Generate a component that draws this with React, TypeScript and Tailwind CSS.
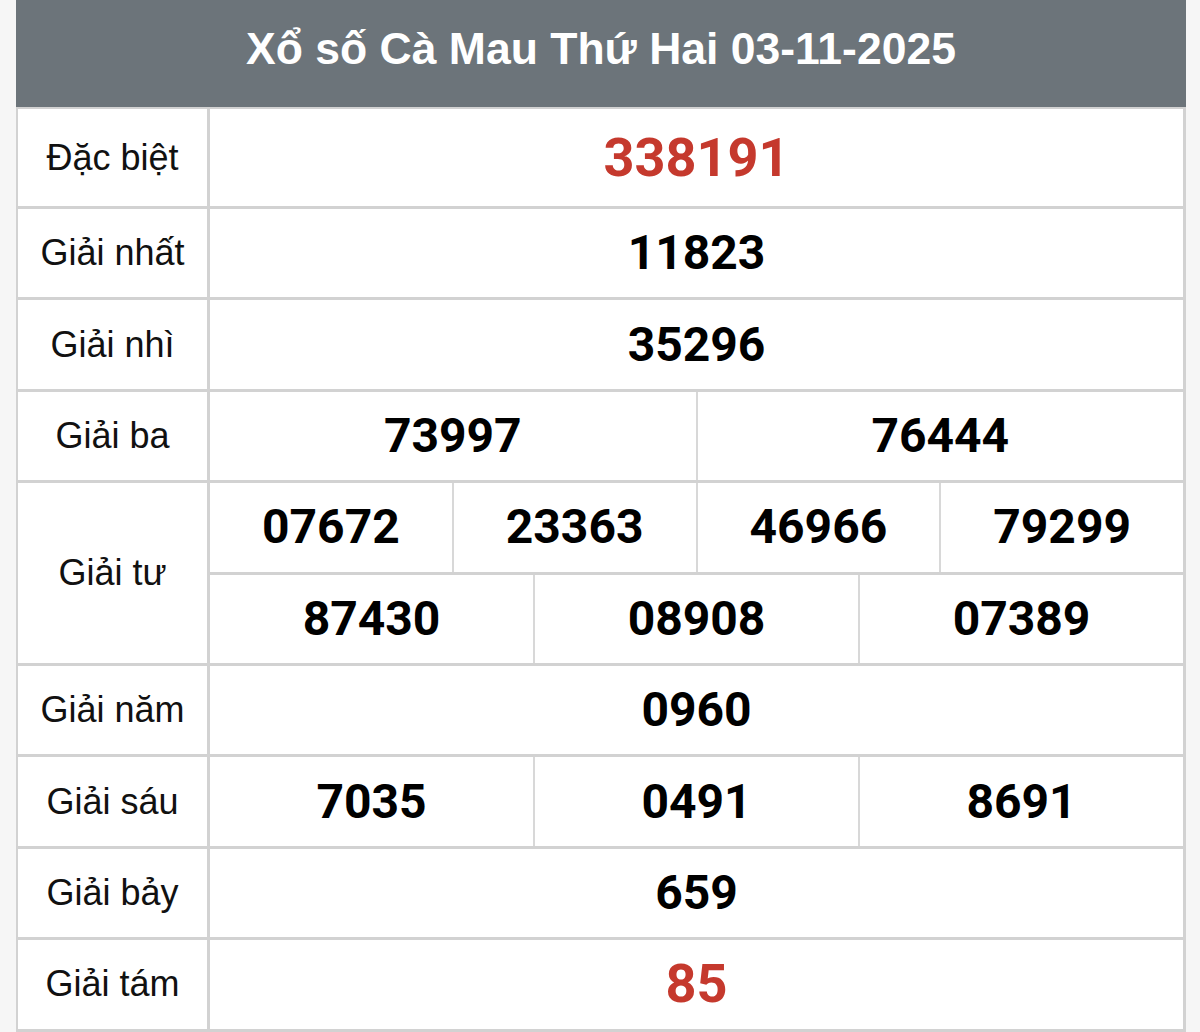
import React from "react";

type Row = {
  label: string;
  lines: string[][];
  red?: boolean;
  big?: boolean;
};

const rows: Row[] = [
  { label: "Đặc biệt", lines: [["338191"]], red: true, big: true },
  { label: "Giải nhất", lines: [["11823"]] },
  { label: "Giải nhì", lines: [["35296"]] },
  { label: "Giải ba", lines: [["73997", "76444"]] },
  { label: "Giải tư", lines: [["07672", "23363", "46966", "79299"], ["87430", "08908", "07389"]] },
  { label: "Giải năm", lines: [["0960"]] },
  { label: "Giải sáu", lines: [["7035", "0491", "8691"]] },
  { label: "Giải bảy", lines: [["659"]] },
  { label: "Giải tám", lines: [["85"]], red: true, big: true },
];

const numFont = { fontFamily: "Roboto, 'Liberation Sans', Arial, sans-serif" };

const PrizeRow = ({ row, first }: { row: Row; first: boolean }) => {
  return (
    <div className={`flex border-b-[3px] border-[#d2d2d2] ${first ? "h-[100px]" : ""}`}>
      <div className="w-[192px] shrink-0 flex items-center justify-center border-r-[3px] border-[#d2d2d2] text-[36px] text-[#111]">
        {row.label}
      </div>
      <div className="flex-1 flex flex-col">
        {row.lines.map((line, i) => (
          <div
            key={i}
            className={`flex shrink-0 ${first ? "flex-1" : "h-[88.4px]"} ${
              i < row.lines.length - 1 ? "border-b-[3px] border-[#d2d2d2] h-[91.4px]" : ""
            }`}
          >
            {line.map((n, j) => (
              <div
                key={n}
                style={numFont}
                className={`flex-1 flex items-center justify-center font-bold leading-none ${
                  j > 0 ? "border-l-2 border-[#d8d8d8]" : ""
                } ${row.red ? "text-[#c5392d]" : "text-black"} ${row.big ? "text-[54px]" : "text-[48px]"}`}
              >
                {n}
              </div>
            ))}
          </div>
        ))}
      </div>
    </div>
  );
};

export default function App() {
  return (
    <div
      className="min-h-[1032px] bg-[#f6f6f6] pl-4 pr-[14px]"
      style={{ fontFamily: "'Liberation Sans', Arial, sans-serif" }}
    >
      <div className="bg-white">
        <div className="h-[107px] bg-[#6c747a] flex items-center justify-center text-white font-bold text-[44.5px] pb-2">
          Xổ số Cà Mau Thứ Hai 03-11-2025
        </div>
        <div className="border-l-2 border-r-[3px] border-t-2 border-[#d2d2d2]">
          {rows.map((r, i) => (
            <PrizeRow key={r.label} row={r} first={i === 0} />
          ))}
        </div>
      </div>
    </div>
  );
}
